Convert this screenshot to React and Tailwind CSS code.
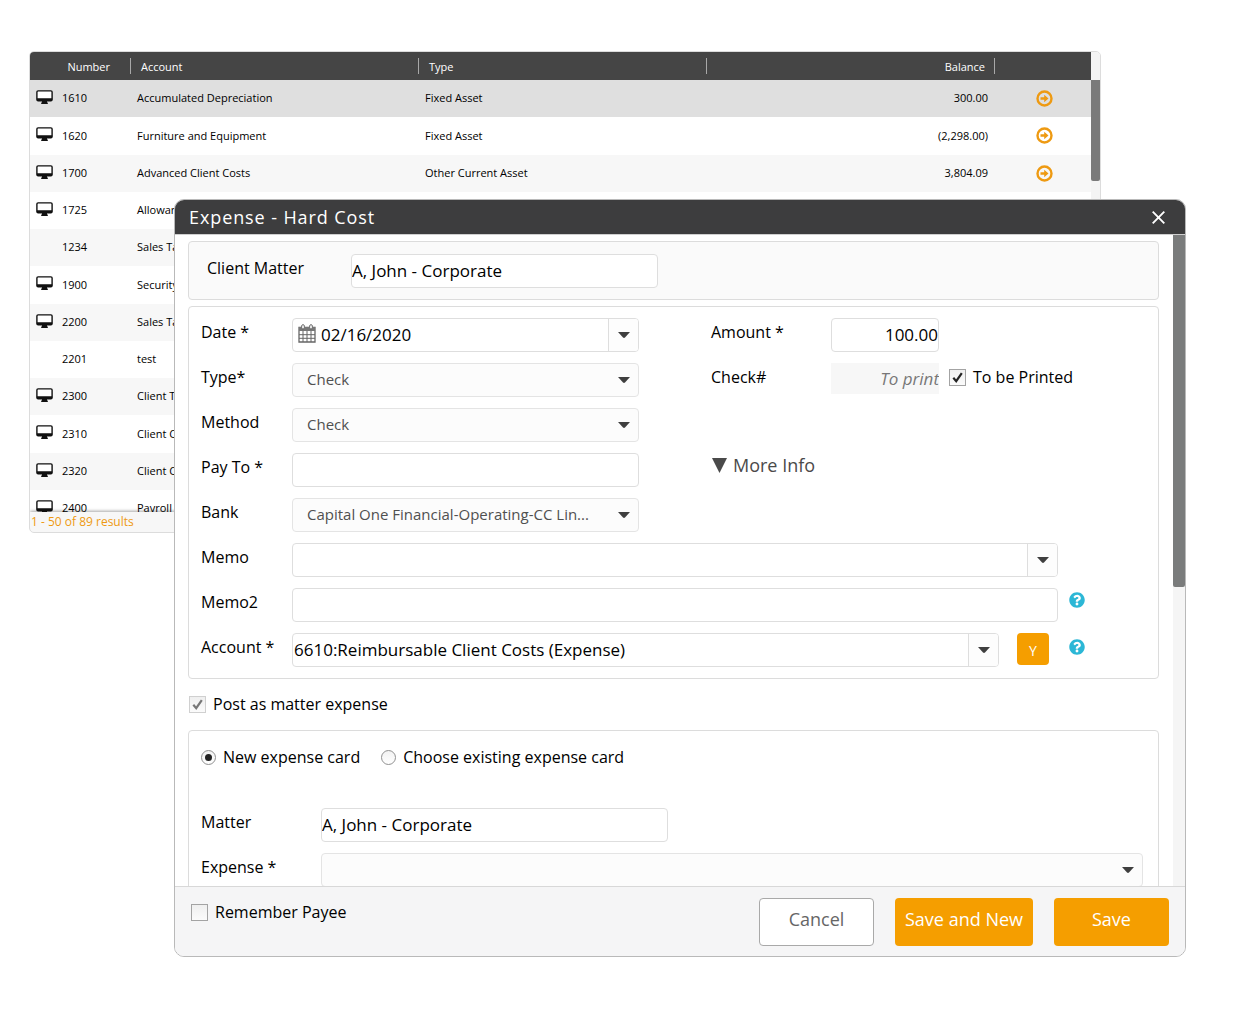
import React, { useState } from "react";
import { FaQuestionCircle } from "react-icons/fa";

const accounts = [
  { number: "1610", name: "Accumulated Depreciation", type: "Fixed Asset", balance: "300.00", icon: true },
  { number: "1620", name: "Furniture and Equipment", type: "Fixed Asset", balance: "(2,298.00)", icon: true },
  { number: "1700", name: "Advanced Client Costs", type: "Other Current Asset", balance: "3,804.09", icon: true },
  { number: "1725", name: "Allowance", type: "", balance: "", icon: true },
  { number: "1234", name: "Sales Tax", type: "", balance: "", icon: false },
  { number: "1900", name: "Security", type: "", balance: "", icon: true },
  { number: "2200", name: "Sales Tax", type: "", balance: "", icon: true },
  { number: "2201", name: "test", type: "", balance: "", icon: false },
  { number: "2300", name: "Client Trust", type: "", balance: "", icon: true },
  { number: "2310", name: "Client Costs", type: "", balance: "", icon: true },
  { number: "2320", name: "Client Costs", type: "", balance: "", icon: true },
  { number: "2400", name: "Payroll", type: "", balance: "", icon: true },
];

function MonitorIcon() {
  return (
    <svg className="block h-[15px] w-[17px]" viewBox="0 0 17 15" aria-hidden="true">
      <rect x="0.9" y="0.9" width="15.2" height="9.8" rx="1.2" fill="#fff" stroke="#111" strokeWidth="1.4" />
      <path d="M0.9 8.3h15.2v1.7a1 1 0 0 1-1 1H1.9a1 1 0 0 1-1-1z" fill="#111" />
      <path d="M6 11h5v1.500h.8v1.500H5.200v-1.500H6z" fill="#111" />
    </svg>
  );
}

function ArrowCircleIcon() {
  return (
    <svg className="block h-[17px] w-[17px]" viewBox="0 0 17 17" aria-hidden="true">
      <circle cx="8.5" cy="8.5" r="7" fill="none" stroke="#ee9a12" strokeWidth="2.4" />
      <path d="M4.500 7.200h3.700V4.700l4.300 3.800-4.300 3.800V9.800H4.500z" fill="#ee9a12" />
    </svg>
  );
}

function CalendarIcon() {
  return (
    <svg className="block h-[19px] w-[18px] shrink-0" viewBox="0 0 18 19" fill="none" stroke="#666" aria-hidden="true">
      <path d="M1 3.500h16V18H1z" strokeWidth="1.3" />
      <path d="M1 3h16v4H1z" fill="#777" stroke="none" />
      <path d="M5 7v11M9 7v11M13 7v11M1 10.700h16M1 14.300h16" strokeWidth="1" />
      <rect x="3.7" y="0.7" width="2.6" height="4.3" rx="1.2" fill="#fff" />
      <rect x="11.7" y="0.7" width="2.6" height="4.3" rx="1.2" fill="#fff" />
    </svg>
  );
}

function Caret() {
  return (
    <svg className="block h-[6px] w-[12px]" viewBox="0 0 12 6" aria-hidden="true">
      <path d="M0 0h12L7 5.500Q6 6.300 5 5.500z" fill="#3f3f3f" />
    </svg>
  );
}

function Label({ htmlFor, wide, children }) {
  return (
    <label htmlFor={htmlFor} className={`shrink-0 text-base leading-[28px] ${wide ? "w-[120px]" : "w-[91px]"}`}>
      {children}
    </label>
  );
}

function TextField({ id, value = "", className = "" }) {
  return (
    <input
      id={id}
      type="text"
      defaultValue={value}
      className={`h-[34px] min-w-0 rounded border border-[#dedede] bg-white pb-[2px] text-[17px] outline-none ${className}`}
    />
  );
}

function SelectField({ id, options, className = "" }) {
  return (
    <div className={`relative h-[34px] min-w-0 ${className}`}>
      <select
        id={id}
        className="h-full w-full appearance-none rounded border border-[#e4e4e4] bg-[#fcfcfc] pr-10 pb-[2px] pl-[14px] text-[15px] text-[#505050] outline-none"
      >
        {options.map((o) => (
          <option key={o}>{o}</option>
        ))}
      </select>
      <div className="pointer-events-none absolute inset-y-0 right-[9px] flex items-center">
        <Caret />
      </div>
    </div>
  );
}

function ComboField({ id, value = "", icon, className = "" }) {
  return (
    <div className={`flex h-[34px] min-w-0 items-center overflow-hidden rounded border border-[#dedede] bg-white ${className}`}>
      {icon}
      <input id={id} type="text" defaultValue={value} className="h-full min-w-0 flex-1 px-px pb-[2px] text-[17px] outline-none" />
      <button type="button" aria-label="Open list" className="flex h-full w-[30px] items-center justify-center border-l border-[#dedede] bg-[#fdfdfd]">
        <Caret />
      </button>
    </div>
  );
}

function Checkbox({ id, checked, muted, children }) {
  const [on, setOn] = useState(Boolean(checked));
  return (
    <div className="flex items-center gap-[7px]">
      <span className="relative block h-[17px] w-[17px] shrink-0">
        <input
          id={id}
          type="checkbox"
          checked={on}
          onChange={(e) => setOn(e.target.checked)}
          className={`block h-full w-full appearance-none border bg-linear-to-b from-[#efefef] to-[#fbfbfb] ${muted ? "border-[#d0d0d0]" : "border-[#a3a3a3]"}`}
        />
        {on && (
          <svg className="pointer-events-none absolute inset-0 h-[17px] w-[17px]" viewBox="0 0 17 17" aria-hidden="true">
            <path d="M4.300 8.800L7.200 12.200 12.800 4.200" fill="none" stroke={muted ? "#777" : "#222"} strokeWidth="2.2" />
          </svg>
        )}
      </span>
      <label htmlFor={id} className="text-base leading-6">{children}</label>
    </div>
  );
}

function Radio({ id, checked, onChange, children }) {
  return (
    <div className="flex items-center gap-[7px]">
      <span className="relative block h-[15px] w-[15px] shrink-0">
        <input
          id={id}
          type="radio"
          name="expense-card"
          checked={checked}
          onChange={onChange}
          className="block h-full w-full appearance-none rounded-full border border-[#909090] bg-linear-to-b from-[#f2f2f2] to-white"
        />
        {checked && <span className="pointer-events-none absolute inset-[4px] rounded-full bg-[#222]" />}
      </span>
      <label htmlFor={id} className="text-base leading-6">{children}</label>
    </div>
  );
}

function HelpButton() {
  return (
    <button type="button" aria-label="Help" className="text-[#2cb7d6]">
      <FaQuestionCircle className="h-4 w-4" />
    </button>
  );
}

function HeaderCell({ className = "", divider = true, children }) {
  return (
    <th className="h-[28px] p-0 font-medium text-white">
      <div className={`h-[16px] leading-[18px] ${divider ? "border-r border-[#a8a8a8]" : ""} ${className}`}>{children}</div>
    </th>
  );
}

function AccountsTable() {
  return (
    <section className="mr-[149px] ml-[29px] overflow-hidden rounded-[5px] border border-[#dcdcdc] bg-white">
      <div className="flex h-[460px]">
        <div className="min-w-0 flex-1 overflow-hidden">
          <table className="h-[475px] w-full table-fixed border-collapse text-[11px] font-medium">
            <colgroup>
              <col className="w-[101px]" />
              <col />
              <col />
              <col />
              <col className="w-[96px]" />
            </colgroup>
            <thead className="bg-[#454545]">
              <tr>
                <HeaderCell className="pr-[20px] text-right">Number</HeaderCell>
                <HeaderCell className="pl-[10px] text-left">Account</HeaderCell>
                <HeaderCell className="pl-[10px] text-left">Type</HeaderCell>
                <HeaderCell className="pr-[9px] text-right">Balance</HeaderCell>
                <HeaderCell divider={false} />
              </tr>
            </thead>
            <tbody>
              {accounts.map((a, i) => (
                <tr key={a.number} className={i === 0 ? "bg-[#dfdfdf]" : i % 2 === 0 ? "bg-[#f7f7f7]" : "bg-white"}>
                  <td className="p-0">
                    <div className="flex items-center pl-[6px]">
                      <span className="w-[26px] pb-[2px]">{a.icon && <MonitorIcon />}</span>
                      {a.number}
                    </div>
                  </td>
                  <td className="truncate py-0 pr-2 pl-[6px]">{a.name}</td>
                  <td className="truncate py-0 pr-2 pl-[6px]">{a.type}</td>
                  <td className="py-0 pr-[7px] text-right">{a.balance}</td>
                  <td className="py-0 pr-0 pl-[2px]">
                    <button type="button" aria-label={`Open ${a.name}`} className="mx-auto block">
                      <ArrowCircleIcon />
                    </button>
                  </td>
                </tr>
              ))}
            </tbody>
          </table>
        </div>
        <div className="w-[9px] bg-[#f4f4f4] pt-[28px]">
          <div className="h-[101px] rounded-b-[2px] bg-[#7a7a7a]" />
        </div>
      </div>
      <div className="relative bg-[#f7f7f7] pl-px text-[12px] leading-[20px] text-[#ee9a12] shadow-[0_-1px_3px_rgba(0,0,0,0.35)]">
        1 - 50 of 89 results
      </div>
    </section>
  );
}

function ExpenseDialog() {
  const [card, setCard] = useState("new");

  return (
    <div
      role="dialog"
      aria-labelledby="dialog-title"
      className="absolute top-[199px] right-[64px] left-[174px] overflow-hidden rounded-[10px] border border-[#b9b9b9] bg-white"
    >
      <header className="flex h-[34px] items-center justify-between bg-[#3d3d3e] pr-[20px] pl-[14px] text-white">
        <h1 id="dialog-title" className="text-lg tracking-wider">Expense - Hard Cost</h1>
        <button type="button" aria-label="Close">
          <svg className="block h-[13px] w-[13px]" viewBox="0 0 13 13" aria-hidden="true">
            <path d="M0.700 0.700l11.600 11.600M12.300 0.700L0.700 12.300" stroke="#fff" strokeWidth="1.9" />
          </svg>
        </button>
      </header>

      <div className="flex h-[652px] border-t border-[#cfcfcf]">
        <div className="flex min-w-0 flex-1 flex-col overflow-hidden pt-[6px] pr-[14px] pl-[13px]">
          <section className="flex shrink-0 rounded border border-[#dcdcdc] bg-[#fafafa] pt-3 pb-[11px] pl-[18px]">
            <label htmlFor="client-matter" className="w-[144px] text-base leading-[28px]">Client Matter</label>
            <TextField id="client-matter" value="A, John - Corporate" className="w-[307px]" />
          </section>

          <section className="mt-[6px] flex shrink-0 flex-col gap-[11px] rounded border border-[#dcdcdc] py-[11px] pl-3">
            <div className="flex">
              <Label htmlFor="date">Date *</Label>
              <ComboField
                id="date"
                value="02/16/2020"
                className="w-[347px]"
                icon={<span className="pr-1 pb-1 pl-[5px]"><CalendarIcon /></span>}
              />
              <span className="w-[72px] shrink-0" />
              <Label htmlFor="amount" wide>Amount *</Label>
              <TextField id="amount" value="100.00" className="w-[108px] text-right" />
            </div>

            <div className="flex">
              <Label htmlFor="type">Type*</Label>
              <SelectField id="type" options={["Check"]} className="w-[347px]" />
              <span className="w-[72px] shrink-0" />
              <Label htmlFor="check-number" wide>Check#</Label>
              <input
                id="check-number"
                type="text"
                placeholder="To print"
                className="h-[31px] w-[108px] bg-[#f7f7f7] text-right text-[17px] italic outline-none placeholder:text-[#777]"
              />
              <div className="ml-[10px] pt-[2px]">
                <Checkbox id="to-be-printed" checked>To be Printed</Checkbox>
              </div>
            </div>

            <div className="flex">
              <Label htmlFor="method">Method</Label>
              <SelectField id="method" options={["Check"]} className="w-[347px]" />
            </div>

            <div className="flex">
              <Label htmlFor="pay-to">Pay To *</Label>
              <TextField id="pay-to" className="w-[347px]" />
              <button type="button" className="ml-[73px] flex h-[24px] items-center gap-[6px] text-lg text-[#4a4a4a]">
                <svg className="block h-[15px] w-[15px]" viewBox="0 0 15 15" aria-hidden="true">
                  <path d="M0 0h15L7.500 15z" fill="#4a4a4a" />
                </svg>
                More Info
              </button>
            </div>

            <div className="flex">
              <Label htmlFor="bank">Bank</Label>
              <SelectField id="bank" options={["Capital One Financial-Operating-CC Lin..."]} className="w-[347px]" />
            </div>

            <div className="flex pr-[100px]">
              <Label htmlFor="memo">Memo</Label>
              <ComboField id="memo" className="flex-1" />
            </div>

            <div className="flex">
              <Label htmlFor="memo2">Memo2</Label>
              <TextField id="memo2" className="flex-1" />
              <div className="flex h-[24px] w-[100px] items-center pl-[11px]">
                <HelpButton />
              </div>
            </div>

            <div className="flex">
              <Label htmlFor="account">Account *</Label>
              <ComboField id="account" value="6610:Reimbursable Client Costs (Expense)" className="flex-1" />
              <div className="flex w-[159px] items-start gap-[20px] pl-[18px]">
                <button type="button" className="h-[32px] w-[32px] rounded bg-[#f59e00] pt-1 text-sm text-white">Y</button>
                <div className="flex h-[28px] items-center">
                  <HelpButton />
                </div>
              </div>
            </div>
          </section>

          <div className="mt-[13px] ml-px">
            <Checkbox id="post-expense" checked muted>Post as matter expense</Checkbox>
          </div>

          <section className="mt-[14px] flex shrink-0 flex-col gap-[11px] rounded border border-[#dcdcdc] pt-[14px] pr-[15px] pb-6 pl-3">
            <div className="mb-[28px] flex gap-[21px]">
              <Radio id="new-card" checked={card === "new"} onChange={() => setCard("new")}>New expense card</Radio>
              <Radio id="existing-card" checked={card === "existing"} onChange={() => setCard("existing")}>
                Choose existing expense card
              </Radio>
            </div>
            <div className="flex">
              <Label htmlFor="matter" wide>Matter</Label>
              <TextField id="matter" value="A, John - Corporate" className="w-[347px]" />
            </div>
            <div className="flex">
              <Label htmlFor="expense" wide>Expense *</Label>
              <SelectField id="expense" options={[""]} className="flex-1" />
            </div>
          </section>
        </div>

        <div className="w-[12px] bg-[#f5f5f5]">
          <div className="h-[352px] rounded-b-[2px] bg-[#7a7c7c]" />
        </div>
      </div>

      <footer className="flex items-start justify-between border-t border-[#d8d8d8] bg-[#f5f5f6] pt-[11px] pr-4 pb-[10px] pl-4">
        <div className="pt-[2px]">
          <Checkbox id="remember-payee">Remember Payee</Checkbox>
        </div>
        <div className="flex gap-[21px] text-lg">
          <button type="button" className="h-[48px] w-[115px] rounded border border-[#a9a9a9] bg-white pb-[6px] text-[#666]">Cancel</button>
          <button type="button" className="h-[48px] w-[138px] rounded bg-[#f59e00] pb-[6px] text-white">Save and New</button>
          <button type="button" className="h-[48px] w-[115px] rounded bg-[#f59e00] pb-[6px] text-white">Save</button>
        </div>
      </footer>
    </div>
  );
}

export default function App() {
  return (
    <main className="relative min-h-screen bg-white pt-[51px] font-['Open_Sans','Noto_Sans',sans-serif] text-black">
      <AccountsTable />
      <ExpenseDialog />
    </main>
  );
}
